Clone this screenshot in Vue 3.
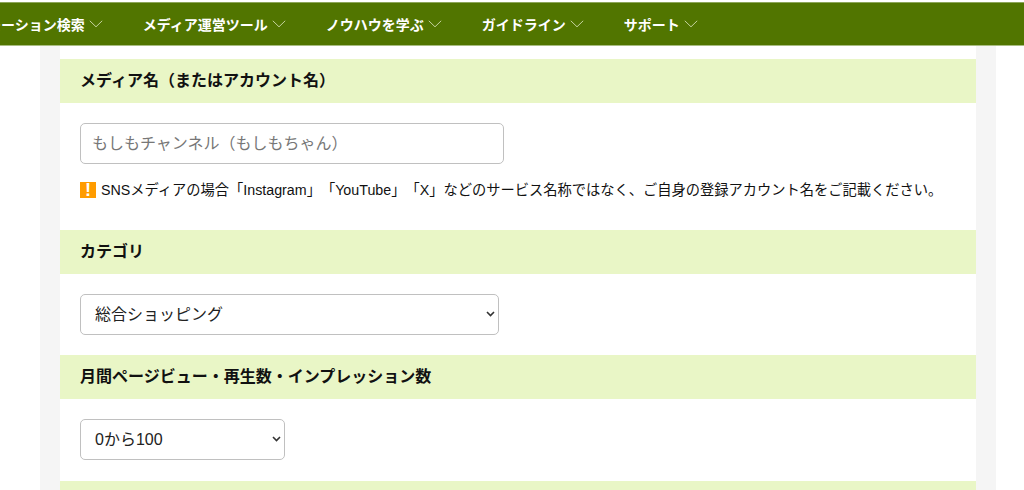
<script setup>
const navItems = ['プロモーション検索', 'メディア運営ツール', 'ノウハウを学ぶ', 'ガイドライン', 'サポート']
</script>

<template>
  <div class="page">
    <nav class="nav">
      <ul class="nav-list">
        <li v-for="item in navItems" :key="item" class="nav-item">
          <span>{{ item }}</span>
          <svg class="chev" width="14" height="8" viewBox="0 0 14 8" aria-hidden="true">
            <path d="M0.8 0.8 L7 6.8 L13.2 0.8" fill="none" stroke="#c4d29c" stroke-width="1" />
          </svg>
        </li>
      </ul>
    </nav>
    <div class="outer">
      <form class="form">
        <h2 class="head">メディア名（またはアカウント名）</h2>
        <div class="body">
          <input class="field text" type="text" placeholder="もしもチャンネル（もしもちゃん）" />
          <p class="note">
            <span class="warn">!</span>
            <span>SNSメディアの場合「Instagram」「YouTube」「X」などのサービス名称ではなく、ご自身の登録アカウント名をご記載ください。</span>
          </p>
        </div>
        <h2 class="head">カテゴリ</h2>
        <div class="body compact">
          <div class="select-wrap sel-wide">
            <select class="field select">
              <option>総合ショッピング</option>
            </select>
            <svg class="select-chev" width="9" height="6" viewBox="0 0 9 6" aria-hidden="true">
              <path d="M1 1 L4.5 4.5 L8 1" fill="none" stroke="#333" stroke-width="1.6" />
            </svg>
          </div>
        </div>
        <h2 class="head">月間ページビュー・再生数・インプレッション数</h2>
        <div class="body compact tall">
          <div class="select-wrap sel-small">
            <select class="field select">
              <option>0から100</option>
            </select>
            <svg class="select-chev" width="9" height="6" viewBox="0 0 9 6" aria-hidden="true">
              <path d="M1 1 L4.5 4.5 L8 1" fill="none" stroke="#333" stroke-width="1.6" />
            </svg>
          </div>
        </div>
        <h2 class="head"></h2>
      </form>
    </div>
  </div>
</template>

<style>
html, body { margin: 0; background: #fff; overflow: hidden; }
</style>

<style scoped>
.page {
  height: 490px;
  overflow: hidden;
  font-family: "Liberation Sans", "Noto Sans CJK JP", sans-serif;
  color: #111;
  text-spacing-trim: space-all;
}
.nav {
  margin-top: 2px;
  height: 44px;
  background: #517500;
  border-top: 1px solid #8da65a;
  border-bottom: 1px solid #a9bd82;
  box-sizing: border-box;
  overflow: hidden;
}
.nav-list {
  list-style: none;
  margin: 0 0 0 -41px;
  padding: 0;
  height: 100%;
  display: flex;
  align-items: center;
  gap: 40px;
  white-space: nowrap;
}
.nav-item {
  display: flex;
  align-items: center;
  gap: 4px;
  color: #fff;
  font-size: 14px;
  font-weight: 700;
  flex: none;
}
.chev { flex: none; }
.outer {
  width: 916px;
  margin-left: 40px;
  padding: 0 20px;
  background: #f5f5f5;
}
.form {
  background: #fff;
  padding-top: 13px;
  height: 431px;
  overflow: hidden;
}
.head {
  margin: 0;
  height: 44px;
  line-height: 44px;
  padding-left: 20px;
  background: #e9f6c6;
  font-size: 16px;
  font-weight: 700;
  color: #111;
}
.body {
  padding: 20px 20px 0;
  height: 107px;
}
.body.compact { height: 61px; }
.body.compact.tall { height: 62px; }
.field {
  display: block;
  box-sizing: border-box;
  height: 41px;
  border: 1px solid #c0c0c0;
  border-radius: 5px;
  background: #fff;
  font-family: inherit;
  font-size: 16px;
  color: #222;
  outline: none;
}
.text {
  width: 424px;
  padding: 0 11px;
}
.text::placeholder { color: #777; opacity: 1; }
.select-wrap { position: relative; }
.select {
  width: 100%;
  padding-left: 14px;
  appearance: none;
}
.select-chev {
  position: absolute;
  right: 4px;
  top: 17px;
  pointer-events: none;
}
.sel-wide { width: 419px; }
.sel-small { width: 205px; }
.note {
  margin: 16px 0 0;
  display: flex;
  align-items: center;
  gap: 5px;
  font-size: 14.25px;
  line-height: 20px;
  color: #111;
  white-space: nowrap;
}
.warn {
  flex: none;
  width: 16px;
  height: 16px;
  background: #ff9c00;
  color: #fff;
  font-size: 18px;
  font-weight: 700;
  line-height: 16px;
  text-align: center;
}
</style>
